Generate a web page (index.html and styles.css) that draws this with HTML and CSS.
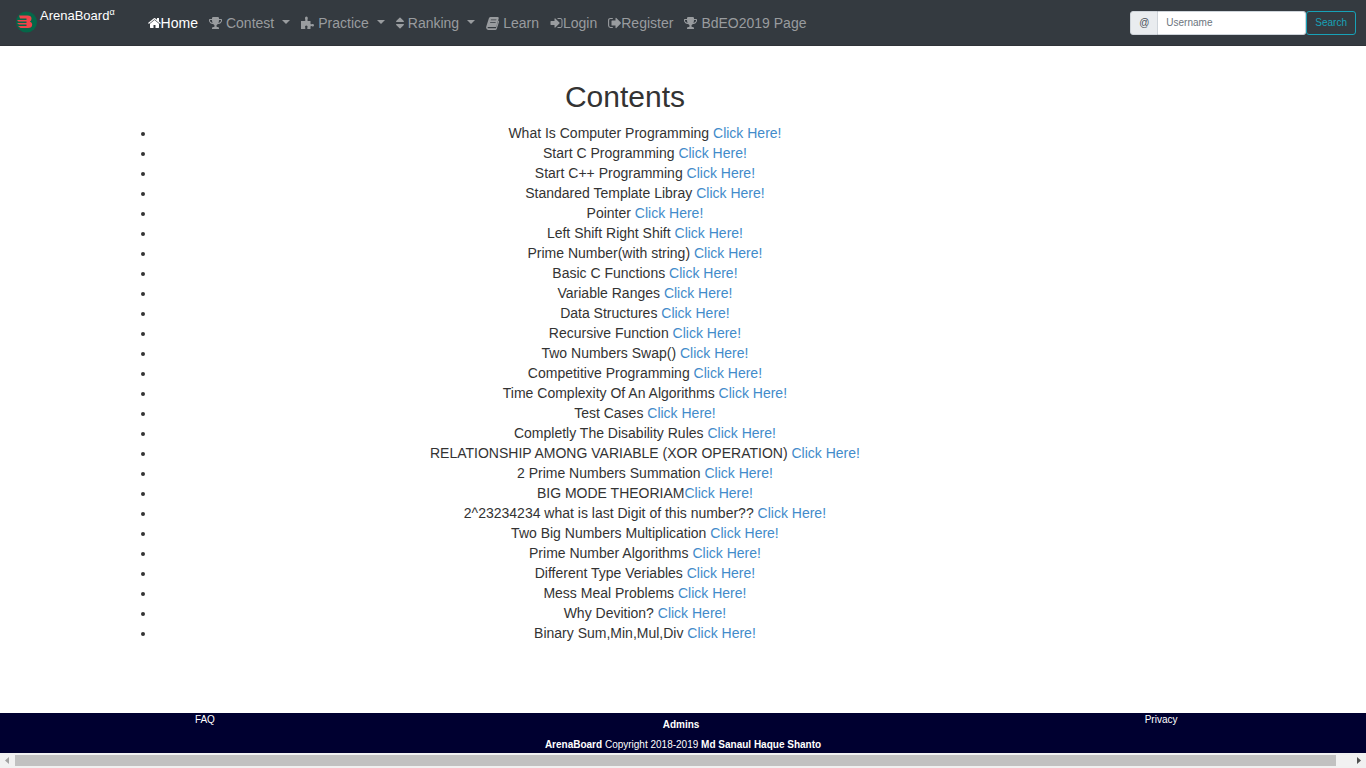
FILE: index.html
```html
<!DOCTYPE html>
<html lang="en">
<head>
<meta charset="utf-8">
<meta name="viewport" content="width=device-width, initial-scale=1">
<title>ArenaBoard</title>
<link rel="stylesheet" href="styles.css">
</head>
<body>
<svg class="sprite" aria-hidden="true">
  <symbol id="trophy" viewBox="64 0 1664 1792"><path d="M522 883q-74-162-74-371h-256v96q0 78 94.500 162t235.500 113zm1078-275v-96h-256q0 209-74 371 141-29 235.500-113t94.500-162zm128-128v128q0 71-41.500 143t-112 130-173 97.500-215.500 44.500q-42 54-95 95-38 34-52.500 72.500t-14.500 89.500q0 54 30.500 91t97.500 37q75 0 133.500 45.500t58.500 114.500v64q0 14-9 23t-23 9h-832q-14 0-23-9t-9-23v-64q0-69 58.500-114.500t133.500-45.500q67 0 97.500-37t30.500-91q0-51-14.500-89.500t-52.500-72.500q-53-41-95-95-113-5-215.500-44.500t-173-97.500-112-130-41.500-143v-128q0-40 28-68t68-28h288v-96q0-66 47-113t113-47h576q66 0 113 47t47 113v96h288q40 0 68 28t28 68z"/></symbol>
</svg>
<header class="navbar">
  <a class="brand" href="#">
    <svg class="logo" viewBox="0 0 24 22" aria-hidden="true"><circle cx="12.500" cy="11" r="10.500" fill="#056648"/><path d="M5 4.500h8.500q4 0 4 3.200 0 2-1.600 2.800 2.300.8 2.300 3 0 3.600-4.200 3.600H6.500L4 15h8.500v-1.400H5l-2-1.600h9.500v-1.600H4.500L3 8.900h9.500V7.500H6z" fill="#f0434a"/></svg>
    <span>ArenaBoard<sup>α</sup></span>
  </a>
  <nav class="menu">
    <a class="item active" href="#"><svg class="icon" viewBox="64 0 1664 1792" aria-hidden="true"><path d="M1472 992v480q0 26-19 45t-45 19h-384v-384h-256v384h-384q-26 0-45-19t-19-45v-480q0-1 .5-3t.5-3l575-474 575 474q1 2 1 6zm223-69l-62 74q-8 9-21 11h-3q-13 0-21-7l-692-577-692 577q-12 8-24 7-13-2-21-11l-62-74q-8-10-7-23.500t11-21.500l719-599q32-26 76-26t76 26l244 204v-195q0-14 9-23t23-9h192q14 0 23 9t9 23v408l219 182q10 8 11 21.500t-7 23.500z"/></svg>Home</a>
    <a class="item spaced" href="#"><svg class="icon" aria-hidden="true"><use href="#trophy"/></svg>Contest<span class="caret"></span></a>
    <a class="item spaced" href="#"><svg class="icon" viewBox="0 0 13 14" aria-hidden="true"><path d="M0 5h3.500q1 0 .9-.8L4 2.600Q3.800.5 5.400.5T6.800 2.600L6.400 4.200Q6.300 5 7.300 5H9.500v2.600q.1.900.9.700l1-.4q1.600-.2 1.600 1.300T11.400 10.500l-1-.4q-.8-.2-.9.700V13H6.800q-.8-.1-.6-.9l.4-1q.2-1.600-1.300-1.600T4 11.100l.4 1q.2.800-.7.900H0z"/></svg>Practice<span class="caret"></span></a>
    <a class="item spaced" href="#"><svg class="icon narrow" viewBox="0 0 8 14" aria-hidden="true"><path d="M0.500 6h7q.7-.3.300-.9L4.500 1.700q-.5-.5-1 0L.2 5.100Q-.2 5.700.5 6zM.5 8h7q.7.300.3.900L4.500 12.300q-.5.500-1 0L.2 8.900Q-.2 8.300.5 8z"/></svg>Ranking<span class="caret"></span></a>
    <a class="item spaced" href="#"><svg class="icon" viewBox="0 0 13 14" aria-hidden="true"><path fill-rule="evenodd" d="M4.500 1h7.200q1.300.2 1 1.500l-2.300 7.700q-.3.900-1.300.9H2.300q-1 0-.8.600.2.600 1 .6h7.400l2.500-7.900q.9.500.6 1.500l-2.200 6.900q-.4 1.200-1.500 1.200H2.200Q.4 13.800.1 11.800.1 10.800.6 9.500L2.900 2.200Q3.500 1 4.500 1zM5 3.500l-.3.800h5.500l.3-.8zM4.300 5.900l-.3.800h5.500l.3-.8z"/></svg>Learn</a>
    <a class="item" href="#"><svg class="icon" viewBox="128 0 1536 1792" aria-hidden="true"><path d="M1312 896q0 26-19 45l-544 544q-19 19-45 19t-45-19-19-45v-288h-448q-26 0-45-19t-19-45v-384q0-26 19-45t45-19h448v-288q0-26 19-45t45-19 45 19l544 544q19 19 19 45zm352-352v704q0 119-84.500 203.500t-203.500 84.500h-320q-13 0-22.500-9.500t-9.500-22.500q0-4-1-20t-.5-26.500 3-23.500 10-19.500 20.500-6.500h320q66 0 113-47t47-113v-704q0-66-47-113t-113-47h-312l-11.500-1-11.500-3-8-5.500-7-9-2-13.500q0-4-1-20t-.5-26.500 3-23.500 10-19.500 20.500-6.500h320q119 0 203.500 84.500t84.500 203.500z"/></svg>Login</a>
    <a class="item" href="#"><svg class="icon" viewBox="0 0 13 14" aria-hidden="true"><path d="M4.800 2.500H2.500Q.6 2.500.6 4.400v5.200q0 1.900 1.900 1.900h2.300" fill="none" stroke="currentColor" stroke-width="1.100"/><path d="M3.500 5q0-.5.500-.5H7.500V2.200q.2-.8.900-.3l4.400 4.700q.3.400 0 .8l-4.400 4.700q-.7.500-.9-.3V9.500H4q-.5 0-.5-.5z"/></svg>Register</a>
    <a class="item spaced" href="#"><svg class="icon" aria-hidden="true"><use href="#trophy"/></svg>BdEO2019 Page</a>
  </nav>
  <form class="search">
    <label class="addon" for="username">@</label>
    <input class="field" id="username" type="text" placeholder="Username">
    <button class="submit" type="button">Search</button>
  </form>
</header>
<main class="content">
  <h1 class="title">Contents</h1>
  <ul class="topics">
    <li>What Is Computer Programming <a href="#">Click Here!</a></li>
    <li>Start C Programming <a href="#">Click Here!</a></li>
    <li>Start C++ Programming <a href="#">Click Here!</a></li>
    <li>Standared Template Libray <a href="#">Click Here!</a></li>
    <li>Pointer <a href="#">Click Here!</a></li>
    <li>Left Shift Right Shift <a href="#">Click Here!</a></li>
    <li>Prime Number(with string) <a href="#">Click Here!</a></li>
    <li>Basic C Functions <a href="#">Click Here!</a></li>
    <li>Variable Ranges <a href="#">Click Here!</a></li>
    <li>Data Structures <a href="#">Click Here!</a></li>
    <li>Recursive Function <a href="#">Click Here!</a></li>
    <li>Two Numbers Swap() <a href="#">Click Here!</a></li>
    <li>Competitive Programming <a href="#">Click Here!</a></li>
    <li>Time Complexity Of An Algorithms <a href="#">Click Here!</a></li>
    <li>Test Cases <a href="#">Click Here!</a></li>
    <li>Completly The Disability Rules <a href="#">Click Here!</a></li>
    <li>RELATIONSHIP AMONG VARIABLE (XOR OPERATION) <a href="#">Click Here!</a></li>
    <li>2 Prime Numbers Summation <a href="#">Click Here!</a></li>
    <li>BIG MODE THEORIAM<a href="#">Click Here!</a></li>
    <li>2^23234234 what is last Digit of this number?? <a href="#">Click Here!</a></li>
    <li>Two Big Numbers Multiplication <a href="#">Click Here!</a></li>
    <li>Prime Number Algorithms <a href="#">Click Here!</a></li>
    <li>Different Type Veriables <a href="#">Click Here!</a></li>
    <li>Mess Meal Problems <a href="#">Click Here!</a></li>
    <li>Why Devition? <a href="#">Click Here!</a></li>
    <li>Binary Sum,Min,Mul,Div <a href="#">Click Here!</a></li>
  </ul>
</main>
<footer class="footer">
  <a href="#">FAQ</a>
  <div class="credits">
    <a class="admins" href="#">Admins</a>
    <p><b>ArenaBoard</b> Copyright 2018-2019 <b>Md Sanaul Haque Shanto</b></p>
  </div>
  <a href="#">Privacy</a>
</footer>
<div class="scrollbar" aria-hidden="true">
  <svg class="arrow" viewBox="0 0 15 15"><path d="M9 4v7L5 7.500z" fill="#a3a3a3"/></svg>
  <div class="track"><div class="thumb"></div></div>
  <svg class="arrow" viewBox="0 0 15 15"><path d="M6 4v7l4-3.500z" fill="#505050"/></svg>
</div>
</body>
</html>
```
FILE: styles.css
```css
* { box-sizing: border-box; }

body {
  margin: 0;
  min-height: 100vh;
  display: flex;
  flex-direction: column;
  background: #fff;
  color: #333;
  font: 14px/20px "Liberation Sans", Arial, sans-serif;
}

a { color: #428bca; text-decoration: none; }

.sprite { display: none; }

/* Top bar */
.navbar {
  display: flex;
  align-items: center;
  min-height: 46px;
  padding: 0 10px 0 14px;
  background: #343a40;
  border-bottom: 1px solid #2f3338;
}

.brand {
  display: flex;
  gap: 2px;
  margin-right: 33px;
  color: #fff;
  font-size: 13px;
  line-height: 20px;
  align-self: flex-start;
  padding-top: 6px;
}

.brand sup { font-size: 9px; line-height: 0; }

.logo { width: 24px; height: 22px; margin-top: 5px; }

.menu { display: flex; flex: 1; gap: 11px; }

.item {
  display: flex;
  align-items: center;
  color: #999c9f;
  white-space: nowrap;
}

.item.active { color: #fff; }
.item.spaced { gap: 4px; }

.icon { width: 13px; height: 14px; fill: currentColor; }
.icon.narrow { width: 8px; }

.caret {
  margin: 0 0 2px 4px;
  border: 4px solid transparent;
  border-top-color: currentColor;
  border-bottom: 0;
}

.search { display: flex; font-size: 10px; }

.addon {
  padding: 0 8px;
  background: #e9ecef;
  border: 1px solid #ced4da;
  border-radius: 3px 0 0 3px;
  color: #495057;
  line-height: 22px;
}

.field {
  width: 148px;
  height: 24px;
  padding: 0 8px;
  border: 1px solid #ced4da;
  border-left: 0;
  border-radius: 0 3px 3px 0;
  background: #fff;
  color: #495057;
  font: inherit;
}

.field::placeholder { color: #6c757d; opacity: 1; }

.submit {
  height: 24px;
  padding: 0 8px;
  border: 1px solid #17a2b8;
  border-radius: 3px;
  background: transparent;
  color: #17a2b8;
  font: inherit;
}

/* Topic list */
.content {
  flex: 1;
  padding: 34px 17% 70px 8.5%;
  text-align: center;
}

.title {
  margin: 0 0 10px;
  font-size: 30px;
  font-weight: 500;
  line-height: 33px;
}

.topics { margin: 0; padding-left: 40px; }

/* Footer */
.footer {
  display: grid;
  grid-template-columns: 3fr 4fr 3fr;
  min-height: 40px;
  background: #000030;
  color: #fff;
  font-size: 10px;
  line-height: 14px;
  text-align: center;
}

.footer a { color: #fff; }

.credits { padding-top: 5px; }
.credits p { margin: 6px 0 0; }
.footer .admins { padding-right: 4px; font-weight: bold; }

/* Horizontal scroll strip */
.scrollbar {
  display: flex;
  height: 15px;
  background: #f1f1f1;
}

.arrow { width: 15px; height: 15px; }
.track { flex: 1; padding: 2px 15px 2px 0; }
.thumb { height: 11px; background: #c1c1c1; }
```
